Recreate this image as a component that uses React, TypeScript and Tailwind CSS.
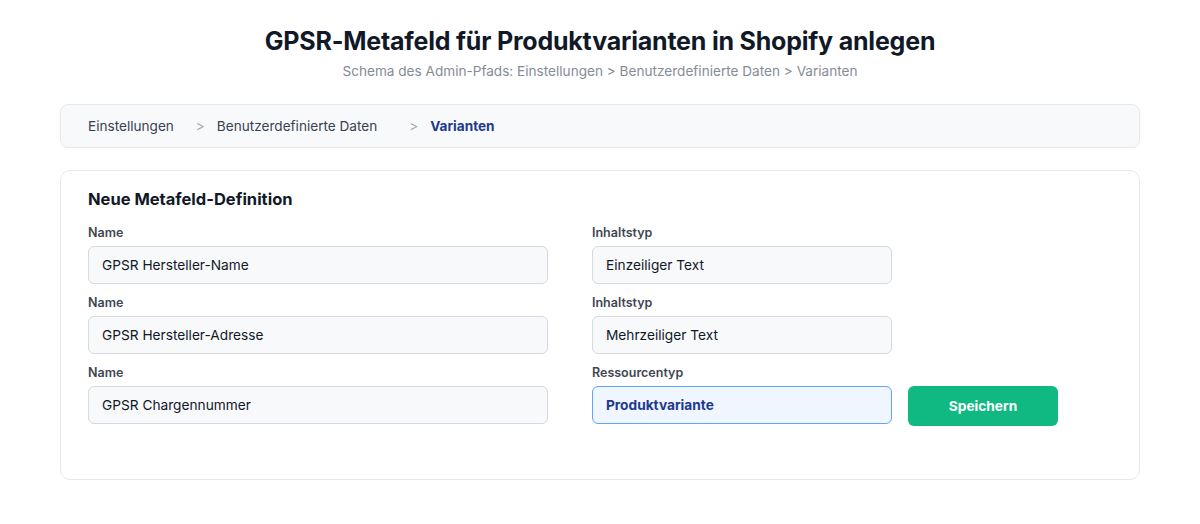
import React from 'react';

interface Field {
    label: string;
    value: string;
}

const rows: { left: Field; right: Field }[] = [
    { left: { label: 'Name', value: 'GPSR Hersteller-Name' }, right: { label: 'Inhaltstyp', value: 'Einzeiliger Text' } },
    { left: { label: 'Name', value: 'GPSR Hersteller-Adresse' }, right: { label: 'Inhaltstyp', value: 'Mehrzeiliger Text' } },
    { left: { label: 'Name', value: 'GPSR Chargennummer' }, right: { label: 'Ressourcentyp', value: 'Produktvariante' } },
];

function Input({ field, width, active }: { field: Field; width: string; active?: boolean }) {
    return (
        <div className={`flex flex-col ${width}`}>
            <label className="text-[12.5px] leading-4 font-semibold text-[#3f4653]">{field.label}</label>
            <div
                className={
                    active
                        ? 'mt-[5px] h-[38px] flex items-center px-[13px] rounded-[6px] border-[1.5px] border-[#60a5fa] bg-[#eff6ff] text-[13.7px] font-bold text-[#1e3a8a]'
                        : 'mt-[5px] h-[38px] flex items-center px-[13px] rounded-[6px] border-[1.5px] border-[#d6d9df] bg-[#f8f9fb] text-[13.7px] text-[#111827]'
                }
            >
                {field.value}
            </div>
        </div>
    );
}

export default function App() {
    return (
        <div className="min-h-screen bg-white px-[60px] pt-[25px] font-['Inter',sans-serif]">
            <h1 className="text-center text-[25px] leading-8 font-bold text-[#111827] tracking-[-0.2px]">
                GPSR-Metafeld für Produktvarianten in Shopify anlegen
            </h1>
            <p className="mt-1 text-center text-[13.6px] leading-5 text-[#868b94]">
                Schema des Admin-Pfads: Einstellungen &gt; Benutzerdefinierte Daten &gt; Varianten
            </p>

            <div className="mt-[23px] h-[44px] flex items-center px-[27px] rounded-[8px] border border-[#e6e8ec] bg-[#f8f9fb] text-[13.6px] text-[#374151]">
                <span>Einstellungen</span>
                <span className="ml-[22px] mr-[12px] text-[#9ca3af]">&gt;</span>
                <span>Benutzerdefinierte Daten</span>
                <span className="ml-[32px] mr-[12px] text-[#9ca3af]">&gt;</span>
                <span className="font-bold text-[#1e3a8a]">Varianten</span>
            </div>

            <div className="mt-[22px] rounded-[10px] border border-[#e6e8ec] bg-white px-[27px] pt-[16px] pb-[55px]">
                <h2 className="text-[16.5px] leading-6 font-bold text-[#111827]">Neue Metafeld-Definition</h2>
                <div className="mt-[14px] flex flex-col gap-[11px]">
                    {rows.map((row, i) => (
                        <div key={i} className="flex items-end">
                            <Input field={row.left} width="w-[460px]" />
                            <div className="ml-[44px]">
                                <Input field={row.right} width="w-[300px]" active={i === 2} />
                            </div>
                            {i === 2 && (
                                <button className="ml-4 mb-[-2px] w-[150px] h-[40px] rounded-[6px] bg-[#10b981] text-white text-[13.7px] font-bold">
                                    Speichern
                                </button>
                            )}
                        </div>
                    ))}
                </div>
            </div>
        </div>
    );
}
